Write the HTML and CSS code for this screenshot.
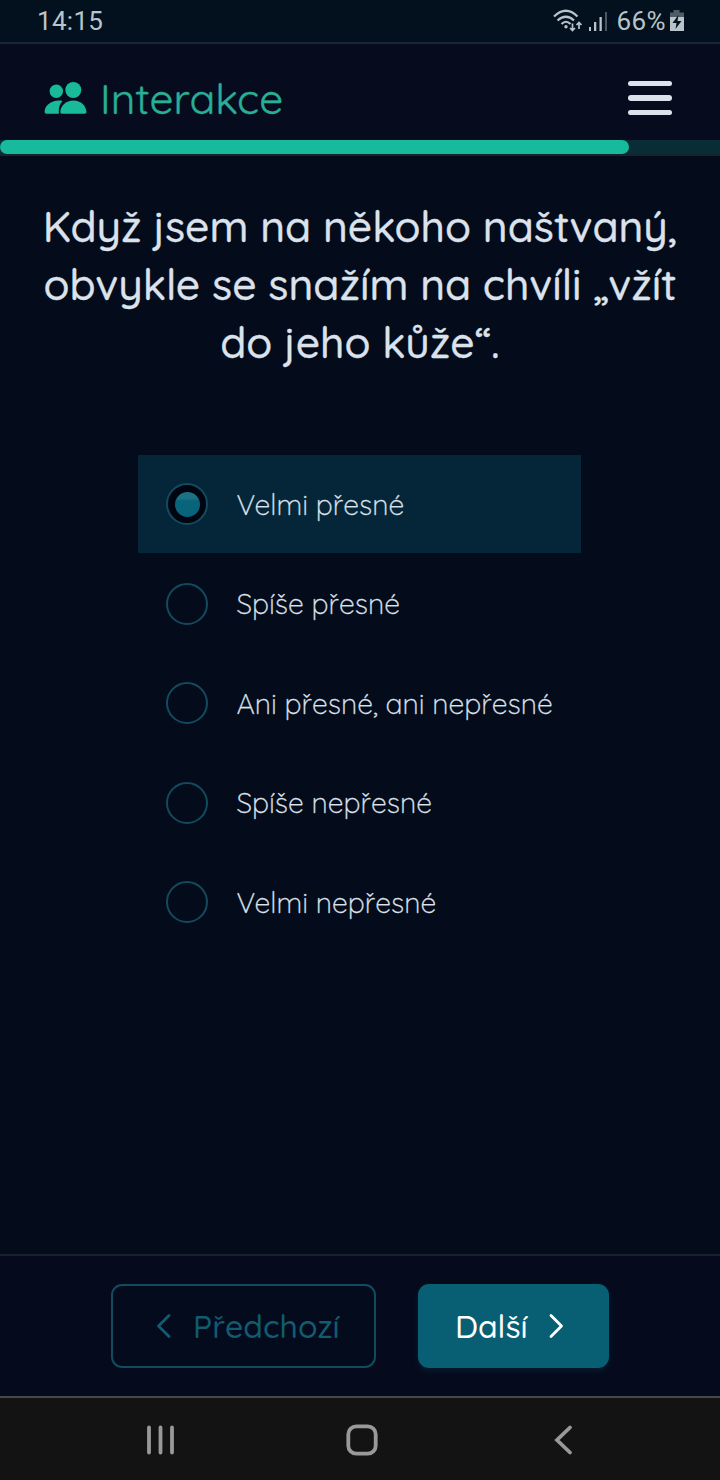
FILE: index.html
```
<!DOCTYPE html>
<html lang="cs">
<head>
  <meta charset="UTF-8" />
  <meta name="viewport" content="width=device-width, initial-scale=1.0" />
  <title>Interakce</title>
  <link rel="stylesheet" href="styles.css">
</head>
<body>
  <div class="status-bar">
    <span class="clock">14:15</span>
    <div class="status-icons">
      <svg class="wifi" width="30" height="24" viewBox="0 0 30 24" fill="none" stroke="#b9c3ca" stroke-width="2.200">
        <path d="M1 7.500Q13 -4 24.500 7.500M4.500 11.500Q13 4 21 11.500M8.500 15Q13 10.500 17.500 15" />
        <circle cx="13" cy="17.800" r="1.700" fill="#b9c3ca" stroke="none" />
        <path d="M19.500 14.500v7M17 19l2.500 2.500 2.500-2.500M26 20v-6.500M23.500 16l2.500-2.500 2.500 2.500" stroke-width="1.700" />
      </svg>
      <svg class="signal" width="20" height="24" viewBox="0 0 20 24" fill="#b9c3ca">
        <rect x="1" y="18" width="2" height="4" />
        <rect x="6" y="13" width="2.300" height="9" />
        <rect x="11.500" y="8" width="2.300" height="14" />
        <rect x="17" y="3" width="2" height="19" opacity=".4" />
      </svg>
      <span class="percent">66%</span>
      <svg class="battery" width="16" height="24" viewBox="0 0 16 24">
        <path d="M4.500 1h6v2.500H15V8H1V3.500h3.500z" fill="#4f5c66" />
        <path d="M1 8h14v14H1z" fill="#b9c3ca" />
        <path d="M9.500 6L3.500 14h4L6.500 20l6-8H8.500z" fill="#04131e" />
      </svg>
    </div>
  </div>

  <header class="header">
    <div class="brand">
      <svg width="44" height="34" viewBox="0 0 44 34" fill="#18ba9a">
        <circle cx="12.300" cy="11.200" r="6.700" />
        <circle cx="29.300" cy="10" r="8" />
        <path d="M18.500 21C9 19 .6 25 .6 32Q.6 33.800 2.300 33.800H14.800C14.500 28.500 15.500 24 18.500 21z" />
        <path d="M29.500 20.500C22 20.500 16.300 26 16.300 32Q16.300 33.800 18 33.800H40.700Q42.500 33.800 42.500 32C41.800 25.500 37 20.500 29.500 20.500z" />
      </svg>
      <span class="brand-name">Interakce</span>
    </div>
    <div class="menu">
      <span></span>
      <span></span>
      <span></span>
    </div>
  </header>
  <div class="progress"><div class="progress-value" style="width: 628.5px"></div></div>

  <main class="content">
    <h1 class="question">
      Když jsem na někoho naštvaný,<br>
      obvykle se snažím na chvíli „vžít<br>
      do jeho kůže“.
    </h1>
    <div class="options">
      <div class="option selected"><i class="radio"></i><span>Velmi přesné</span></div>
      <div class="option"><i class="radio"></i><span>Spíše přesné</span></div>
      <div class="option"><i class="radio"></i><span>Ani přesné, ani nepřesné</span></div>
      <div class="option"><i class="radio"></i><span>Spíše nepřesné</span></div>
      <div class="option"><i class="radio"></i><span>Velmi nepřesné</span></div>
    </div>
  </main>

  <footer class="footer">
    <button class="btn prev">
      <svg width="16" height="26" viewBox="0 0 16 26"><path d="M13 2.500L2.500 13 13 23.500" /></svg>
      <span>Předchozí</span>
    </button>
    <button class="btn next">
      <span>Další</span>
      <svg width="16" height="26" viewBox="0 0 16 26"><path d="M3 2.500L13.500 13 3 23.500" /></svg>
    </button>
  </footer>

  <nav class="nav-bar">
    <svg width="30" height="32" viewBox="0 0 30 32"><path d="M3 3.500v25M14.500 3.500v25M26 3.500v25" /></svg>
    <svg width="32" height="32" viewBox="0 0 32 32"><rect x="2.300" y="2.300" width="27.400" height="27.400" rx="8" /></svg>
    <svg width="20" height="32" viewBox="0 0 20 32"><path d="M17 3.500L4 16l13 12.500" /></svg>
  </nav>
</body>
</html>
```
FILE: styles.css
```
* {
  box-sizing: border-box;
}
body {
  margin: 0;
  height: 1480px;
  display: flex;
  flex-direction: column;
  overflow: hidden;
  background-color: #040b1b;
  color: #dce2ec;
  font-family: Quicksand, Lato, sans-serif;
}
svg {
  display: block;
  flex: none;
}
.status-bar {
  height: 44px;
  padding: 0 35px 0 37px;
  display: flex;
  align-items: center;
  justify-content: space-between;
  background: #02111d;
  border-bottom: 2px solid #162835;
  color: #b9c3ca;
  font-family: Roboto, sans-serif;
  font-size: 26px;
}
.clock {
  letter-spacing: 0.3px;
}
.status-icons {
  display: flex;
  align-items: center;
}
.signal {
  margin: 0 9px 0 5px;
}
.percent {
  margin-right: 3px;
  letter-spacing: 0.4px;
}
.header {
  height: 96px;
  padding: 0 48px 0 44px;
  display: flex;
  align-items: center;
  justify-content: space-between;
  background: #060b1d;
}
.brand {
  display: flex;
  align-items: center;
  gap: 12px;
  padding-top: 10px;
}
.brand-name {
  padding-top: 1px;
  color: #29af96;
  font-size: 42.6px;
  line-height: 50px;
  -webkit-text-stroke: 0.4px;
}
.menu {
  width: 44px;
  display: flex;
  flex-direction: column;
  gap: 9.5px;
  padding-top: 12px;
}
.menu span {
  height: 5.3px;
  border-radius: 3px;
  background: #dce2ec;
}
.progress {
  height: 16px;
  background: #0a2c36;
  border-bottom: 2px solid #14252e;
}
.progress-value {
  height: 14px;
  border-radius: 7px;
  background: #18ba9d;
}
.content {
  flex: 1;
  padding-top: 41px;
}
.question {
  margin: 0;
  font-size: 42.6px;
  font-weight: 500;
  line-height: 58px;
  text-align: center;
  white-space: nowrap;
  -webkit-text-stroke: 0.3px;
}
.options {
  width: 443px;
  margin: 84px 0 0 138.4px;
  display: flex;
  flex-direction: column;
  gap: 1.5px;
}
.option {
  height: 98px;
  padding: 0 28px;
  display: flex;
  align-items: center;
  gap: 28px;
  font-size: 28.4px;
  font-weight: 300;
  white-space: nowrap;
  -webkit-text-stroke: 0.3px;
}
.selected {
  background: #052638;
}
.radio {
  width: 42px;
  height: 42px;
  flex: none;
  border: 2px solid #124b5d;
  border-radius: 50%;
}
.selected .radio {
  padding: 6.5px;
  background: #010511;
}
.selected .radio::after {
  content: "";
  display: block;
  width: 25px;
  height: 25px;
  border-radius: 50%;
  background: linear-gradient(#1b7286 25%, #08647a 37%);
}
.footer {
  height: 142px;
  padding-top: 28px;
  display: flex;
  justify-content: center;
  gap: 42px;
  border-top: 2px solid #17212f;
  background: #050b1d;
}
.btn {
  height: 84px;
  padding: 0;
  display: flex;
  align-items: center;
  border-radius: 11px;
  font-family: inherit;
  font-size: 32px;
  font-weight: 500;
}
.btn svg {
  fill: none;
  stroke: currentColor;
  stroke-width: 2.8;
  stroke-linecap: round;
  stroke-linejoin: round;
}
.prev {
  width: 265px;
  padding-left: 43px;
  gap: 21px;
  color: #125b70;
  background: #030b1c;
  border: 2px solid #124b5d;
}
.next {
  width: 191px;
  padding-left: 37px;
  gap: 20px;
  color: #fff;
  background: #085f74;
  border: none;
  box-shadow: 0 3px 6px rgba(8, 95, 116, 0.2);
}
.nav-bar {
  height: 84px;
  padding: 2px 147px 0 146px;
  display: flex;
  align-items: center;
  justify-content: space-between;
  background: #131313;
  border-top: 2px solid #454849;
}
.nav-bar svg {
  fill: none;
  stroke: #999;
  stroke-width: 3.8;
  stroke-linecap: round;
}
.nav-bar svg:nth-child(2) {
  margin-right: 5px;
}
```
